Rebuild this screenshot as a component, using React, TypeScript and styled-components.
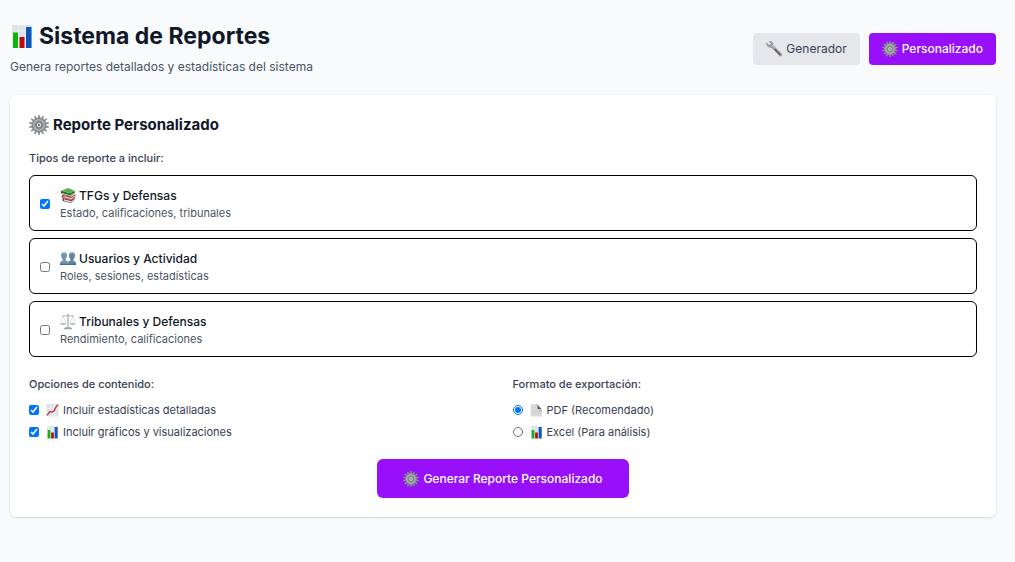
import React from "react";
import styled, { createGlobalStyle } from "styled-components";

const GlobalStyle = createGlobalStyle`
  *, *::before, *::after { box-sizing: border-box; }
  body {
    margin: 0;
    background: #f9fafb;
    color: #101828;
    font-family: Inter, "Liberation Sans", sans-serif;
    font-size: 12px;
    line-height: 19px;
  }
  h1, h2, p, fieldset, legend { margin: 0; padding: 0; border: 0; }
  button, input { font: inherit; }
`;

const Page = styled.main`
  padding: 22px 19px 44px 10px;
  background: #f8fafc;
  min-height: 100vh;
`;

const Header = styled.header`
  display: flex;
  align-items: center;
  justify-content: space-between;
  margin-bottom: 19px;
`;

const Title = styled.h1`
  display: flex;
  align-items: center;
  gap: 5px;
  font-size: 23px;
  line-height: 29px;
  font-weight: 700;
`;

const Subtitle = styled.p`
  margin-top: 6px;
  color: #4a5565;
`;

const Nav = styled.nav`
  display: flex;
  gap: 9px;
`;

const Button = styled.button<{ $primary?: boolean; $large?: boolean }>`
  display: flex;
  align-items: center;
  gap: 4px;
  border: 0;
  border-radius: ${(p) => (p.$large ? 6 : 4)}px;
  padding: ${(p) => (p.$large ? "10px 26px" : "6px 13px")};
  font-weight: ${(p) => (p.$primary ? 500 : 400)};
  line-height: ${(p) => (p.$large ? 19 : 20)}px;
  color: ${(p) => (p.$primary ? "#fff" : "#364153")};
  background: ${(p) => (p.$primary ? "#9810fa" : "#e5e7eb")};
  cursor: pointer;
`;

const Card = styled.form`
  background: #fff;
  border-radius: 6px;
  padding: 19px;
  box-shadow: 0 1px 2px rgba(0, 0, 0, 0.12), 0 0 2px rgba(0, 0, 0, 0.05);
`;

const CardTitle = styled.h2`
  display: flex;
  align-items: center;
  gap: 4px;
  font-size: 15px;
  line-height: 22px;
  font-weight: 700;
  margin-bottom: 14px;
`;

const Group = styled.fieldset`
  min-width: 0;
`;

const Legend = styled.legend<{ $gap: number }>`
  color: #364153;
  font-size: 11px;
  line-height: 16px;
  font-weight: 500;
  margin-bottom: ${(p) => p.$gap}px;
`;

const TypeList = styled.div`
  display: grid;
  gap: 7px;
`;

const TypeRow = styled.label`
  display: flex;
  align-items: center;
  gap: 10px;
  border: 1px solid #000;
  border-radius: 6px;
  padding: 10px 10px 9px;
  cursor: pointer;
`;

const TypeName = styled.span`
  display: flex;
  align-items: center;
  gap: 3px;
  font-weight: 500;
`;

const TypeText = styled.span`
  display: block;
  color: #4a5565;
  font-size: 11px;
  line-height: 16px;
`;

const Control = styled.input`
  flex: none;
  width: 10px;
  height: 10px;
  margin: 0;
`;

const Columns = styled.div`
  display: grid;
  grid-template-columns: 1fr 1fr;
  gap: 19px;
  margin: 19px 0;
`;

const OptionList = styled.div`
  display: grid;
  gap: 6px;
`;

const Option = styled.label`
  display: flex;
  align-items: center;
  gap: 7px;
  color: #364153;
  font-size: 11px;
  line-height: 16px;
  cursor: pointer;
`;

const OptionText = styled.span`
  display: flex;
  align-items: center;
  gap: 4px;
`;

const Actions = styled.div`
  display: flex;
  justify-content: center;
`;

const Icon = styled.svg<{ $size: number }>`
  flex: none;
  width: ${(p) => p.$size}px;
  height: ${(p) => p.$size}px;
`;

type IconProps = { size: number };

const BarsIcon = ({ size }: IconProps) => (
  <Icon $size={size} viewBox="0 0 24 24" aria-hidden="true">
    <rect x="2" y="0" width="20" height="23" fill="#dde5ec" />
    <path d="M2 6h20M2 12h20M2 18h20M8.500 0v23M15.500 0v23" stroke="#eef3f7" strokeWidth=".6" />
    <rect x="3" y="7.500" width="5" height="15.500" fill="#0eb40e" />
    <rect x="9.500" y="12" width="5" height="11" fill="#bd0b10" />
    <rect x="16" y="2" width="5.500" height="21" fill="#0b55bd" />
  </Icon>
);

const ChartIcon = ({ size }: IconProps) => (
  <Icon $size={size} viewBox="0 0 24 24" aria-hidden="true">
    <rect x="1" width="22" height="23" fill="#dce4ea" />
    <path d="M1 8h22M1 16h22M8 0v23M16 0v23" stroke="#f3f6f8" />
    <path d="M2 21l5-7 4 1 4-2 3-7 4-5" fill="none" stroke="#d32430" strokeWidth="2.400" />
  </Icon>
);

const teeth = Array.from({ length: 14 }, (_, i) => (i * 360) / 14);

const GearIcon = ({ size }: IconProps) => (
  <Icon $size={size} viewBox="0 0 24 24" aria-hidden="true">
    {teeth.map((a) => (
      <path key={a} d="M10.600 4.500l.5-4.500h1.800l.5 4.500z" fill="#8b9094" transform={`rotate(${a} 12 12)`} />
    ))}
    <circle cx="12" cy="12" r="8" fill="#b0b4b7" stroke="#85898c" strokeWidth="1.800" />
    <circle cx="12" cy="12" r="5.200" fill="#7b8084" stroke="#9fa4a8" />
    <circle cx="12" cy="12" r="3.300" fill="#dfe3e6" stroke="#6a6f73" strokeWidth="1" />
    <circle cx="12" cy="12" r="1.200" fill="#51575c" />
  </Icon>
);

const WrenchIcon = ({ size }: IconProps) => (
  <Icon $size={size} viewBox="0 0 24 24" aria-hidden="true">
    <path
      d="M4.500 .5C7.500-.2 10.300 1.800 10.500 5c0 1 .2 1.700 1 2.500l11.800 12c1.500 1.800-.9 4.200-2.700 2.700L8.800 10.200c-.8-.8-1.600-1-2.600-1C2.700 9.200.4 6.300 1 3.200l3.500 3.300 2.600-.6.6-2.400z"
      fill="#a0a4a6"
      stroke="#777b7e"
      strokeWidth=".8"
    />
    <path d="M13 12l8.500 9" stroke="#6d5755" strokeWidth="2" />
    <path d="M9 6l4 4" stroke="#d3d6d8" strokeWidth="1.200" />
  </Icon>
);

const BooksIcon = ({ size }: IconProps) => (
  <Icon $size={size} viewBox="0 0 24 24" aria-hidden="true">
    <path d="M5 15l12 3 5-5v5l-5 5-12-3c-2-1-2-4 0-5z" fill="#545258" />
    <path d="M6 17l11 3 5-4v2l-5 4-11-3z" fill="#dedbd8" />
    <path d="M4 10l13 3 6-4v4l-6 5-13-3c-2-1-2-4 0-5z" fill="#c92b2b" />
    <path d="M5 12l12 3 5-4v2l-5 4-12-3z" fill="#f0d9d3" />
    <path d="M2 4l13 4 7-4v4l-7 5L3 9C1 8 1 5 2 4z" fill="#236b28" />
    <path d="M3 7.500l12 3.500 6-4v1l-6 4-12-3.500z" fill="#e1e8d9" />
    <path d="M2 4L12 0l10 4-7 4z" fill="#60ae4e" />
  </Icon>
);

const PeopleIcon = ({ size }: IconProps) => (
  <Icon $size={size} viewBox="0 0 24 24" aria-hidden="true">
    <path d="M6 2c3 0 4.800 2 4.500 5-.2 2-.9 3.800-2 5v2.200l3.300 1.600V21H0v-3c0-1.500.8-2.200 4-3.500V12C2.800 11 1.800 9 1.600 7 1.300 4 3 2 6 2z" fill="#6f95b4" />
    <path d="M18 2c3 0 4.800 2 4.500 5-.2 2-1 4-2.300 5v2.500c3.200 1.300 3.800 2 3.800 3.500v3H12.300v-5.200l3.300-1.600V12c-1.200-1-1.900-3-2.100-5-.3-3 1.500-5 4.500-5z" fill="#5d86a6" />
    <path d="M3 5c1-2 4-2 5 0M15 5c1-2 4-2 5 0" fill="none" stroke="#93b3cc" strokeWidth="1.500" />
    <path d="M0 19h24v2H0z" fill="#486f8d" />
  </Icon>
);

const ScalesIcon = ({ size }: IconProps) => (
  <Icon $size={size} viewBox="0 0 24 24" aria-hidden="true">
    <path d="M5 3L1.500 14M5 3l4 11M19 3l-4 11M19 3l3.500 11" stroke="#c3c7ca" strokeWidth=".8" />
    <path d="M3 3h7l2-2 2 2h7" fill="none" stroke="#a7acb0" strokeWidth="1.400" />
    <path d="M12 0v21" stroke="#979ca0" strokeWidth="1.600" />
    <path d="M0 14h9.500c-1 3.500-8.500 3.500-9.500 0zM14.500 14H24c-1 3.500-8.500 3.500-9.500 0z" fill="#b3b8bb" />
    <path d="M6 22c0-1.500 2-2 6-2s6 .5 6 2v1H6z" fill="#9ca1a5" />
  </Icon>
);

const PageIcon = ({ size }: IconProps) => (
  <Icon $size={size} viewBox="0 0 24 24" aria-hidden="true">
    <path d="M1 0h12l9 9v14H1z" fill="#dcdcdc" />
    <path d="M4 6h7M4 10h8M4 14h15M4 18h15" stroke="#c9c9c9" strokeWidth="1.300" />
    <path d="M12 0l10 10c-2-1-5-1-8 0 .5-3 0-7-2-10z" fill="#555" />
    <path d="M15 10l7 6v-6z" fill="#bdbdbd" />
  </Icon>
);

const reportTypes = [
  { id: "tfgs", name: "TFGs y Defensas", text: "Estado, calificaciones, tribunales", Glyph: BooksIcon, on: true },
  { id: "usuarios", name: "Usuarios y Actividad", text: "Roles, sesiones, estadísticas", Glyph: PeopleIcon, on: false },
  { id: "tribunales", name: "Tribunales y Defensas", text: "Rendimiento, calificaciones", Glyph: ScalesIcon, on: false },
];

const contentOptions = [
  { id: "estadisticas", label: "Incluir estadísticas detalladas", Glyph: ChartIcon },
  { id: "graficos", label: "Incluir gráficos y visualizaciones", Glyph: BarsIcon },
];

const formats = [
  { id: "pdf", label: "PDF (Recomendado)", Glyph: PageIcon, on: true },
  { id: "excel", label: "Excel (Para análisis)", Glyph: BarsIcon, on: false },
];

export default function App() {
  return (
    <>
      <GlobalStyle />
      <Page>
        <Header>
          <div>
            <Title>
              <BarsIcon size={24} />
              Sistema de Reportes
            </Title>
            <Subtitle>Genera reportes detallados y estadísticas del sistema</Subtitle>
          </div>
          <Nav>
            <Button type="button">
              <WrenchIcon size={16} />
              Generador
            </Button>
            <Button type="button" $primary>
              <GearIcon size={16} />
              Personalizado
            </Button>
          </Nav>
        </Header>

        <Card onSubmit={(e) => e.preventDefault()}>
          <CardTitle>
            <GearIcon size={20} />
            Reporte Personalizado
          </CardTitle>

          <Group>
            <Legend $gap={9}>Tipos de reporte a incluir:</Legend>
            <TypeList>
              {reportTypes.map(({ id, name, text, Glyph, on }) => (
                <TypeRow key={id}>
                  <Control type="checkbox" name={id} defaultChecked={on} />
                  <span>
                    <TypeName>
                      <Glyph size={16} />
                      {name}
                    </TypeName>
                    <TypeText>{text}</TypeText>
                  </span>
                </TypeRow>
              ))}
            </TypeList>
          </Group>

          <Columns>
            <Group>
              <Legend $gap={10}>Opciones de contenido:</Legend>
              <OptionList>
                {contentOptions.map(({ id, label, Glyph }) => (
                  <Option key={id}>
                    <Control type="checkbox" name={id} defaultChecked />
                    <OptionText>
                      <Glyph size={13} />
                      {label}
                    </OptionText>
                  </Option>
                ))}
              </OptionList>
            </Group>
            <Group>
              <Legend $gap={10}>Formato de exportación:</Legend>
              <OptionList>
                {formats.map(({ id, label, Glyph, on }) => (
                  <Option key={id}>
                    <Control type="radio" name="formato" value={id} defaultChecked={on} />
                    <OptionText>
                      <Glyph size={13} />
                      {label}
                    </OptionText>
                  </Option>
                ))}
              </OptionList>
            </Group>
          </Columns>

          <Actions>
            <Button type="submit" $primary $large>
              <GearIcon size={16} />
              Generar Reporte Personalizado
            </Button>
          </Actions>
        </Card>
      </Page>
    </>
  );
}
